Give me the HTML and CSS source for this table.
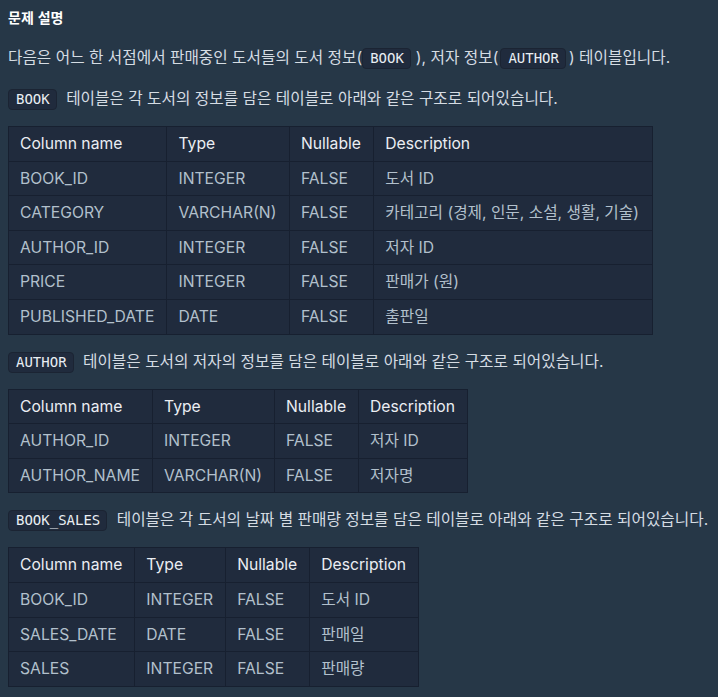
FILE: index.html
```html
<!DOCTYPE html>
<html lang="ko">
<head>
<meta charset="utf-8">
<link rel="stylesheet" href="styles.css">
</head>
<body>
<div class="desc">
  <h5 class="title">문제 설명</h5>
  <p class="intro">다음은 어느 한 서점에서 판매중인 도서들의 도서 정보(<code>BOOK</code>), 저자 정보(<code>AUTHOR</code>) 테이블입니다.</p>
  <p><code>BOOK</code> 테이블은 각 도서의 정보를 담은 테이블로 아래와 같은 구조로 되어있습니다.</p>
  <table class="t1">
    <thead><tr><th>Column name</th><th>Type</th><th>Nullable</th><th>Description</th></tr></thead>
    <tbody>
      <tr><td>BOOK_ID</td><td>INTEGER</td><td>FALSE</td><td>도서 ID</td></tr>
      <tr><td>CATEGORY</td><td>VARCHAR(N)</td><td>FALSE</td><td>카테고리 (경제, 인문, 소설, 생활, 기술)</td></tr>
      <tr><td>AUTHOR_ID</td><td>INTEGER</td><td>FALSE</td><td>저자 ID</td></tr>
      <tr><td>PRICE</td><td>INTEGER</td><td>FALSE</td><td>판매가 (원)</td></tr>
      <tr><td>PUBLISHED_DATE</td><td>DATE</td><td>FALSE</td><td>출판일</td></tr>
    </tbody>
  </table>
  <p><code>AUTHOR</code> 테이블은 도서의 저자의 정보를 담은 테이블로 아래와 같은 구조로 되어있습니다.</p>
  <table class="t2">
    <thead><tr><th>Column name</th><th>Type</th><th>Nullable</th><th>Description</th></tr></thead>
    <tbody>
      <tr><td>AUTHOR_ID</td><td>INTEGER</td><td>FALSE</td><td>저자 ID</td></tr>
      <tr><td>AUTHOR_NAME</td><td>VARCHAR(N)</td><td>FALSE</td><td>저자명</td></tr>
    </tbody>
  </table>
  <p><code>BOOK_SALES</code> 테이블은 각 도서의 날짜 별 판매량 정보를 담은 테이블로 아래와 같은 구조로 되어있습니다.</p>
  <table class="t3">
    <thead><tr><th>Column name</th><th>Type</th><th>Nullable</th><th>Description</th></tr></thead>
    <tbody>
      <tr><td>BOOK_ID</td><td>INTEGER</td><td>FALSE</td><td>도서 ID</td></tr>
      <tr><td>SALES_DATE</td><td>DATE</td><td>FALSE</td><td>판매일</td></tr>
      <tr><td>SALES</td><td>INTEGER</td><td>FALSE</td><td>판매량</td></tr>
    </tbody>
  </table>
</div>
</body>
</html>
```
FILE: styles.css
```css
html, body {
  margin: 0;
  padding: 0;
  background: #263747;
}
body {
  font-family: Inter, "Noto Sans CJK KR", sans-serif;
  color: #d5dce3;
}
.desc {
  padding: 0 8px;
}
.title {
  margin: 8px 0 20px;
  font-size: 14px;
  line-height: 18px;
  font-weight: 700;
  color: #ffffff;
  font-family: "Noto Sans CJK KR", sans-serif;
}
p {
  margin: 0 0 15px;
  font-size: 15.7px;
  line-height: 24px;
  height: 24px;
  font-family: Inter, "Noto Sans CJK KR", sans-serif;
  color: #d5dce3;
  white-space: nowrap;
}
p.intro {
  margin-bottom: 17px;
}
code {
  font-family: "DejaVu Sans Mono", monospace;
  font-size: 14px;
  line-height: 19px;
  display: inline-block;
  padding: 0 6px 0 7px;
  margin: 0 3px 0 2px;
  background: #202b3d;
  border: 1px solid #1b2433;
  border-radius: 4px;
  color: #e9eef3;
  vertical-align: 0;
}
p > code:first-child {
  margin-left: 0;
  margin-right: 5px;
}
table {
  border-collapse: collapse;
  background: #202b3d;
  margin: 0 0 15px;
  font-size: 15.7px;
}
th, td {
  border: 1px solid #172030;
  padding: 6px 12px 5px 11px;
  line-height: 22.6px;
  text-align: left;
  font-weight: 400;
  white-space: nowrap;
}
th {
  color: #ebeef3;
}
td {
  color: #b2c0cc;
}
.t1 { width: 645px; }
.t1 th:nth-child(1) { width: 157px; box-sizing: border-box; }
```
